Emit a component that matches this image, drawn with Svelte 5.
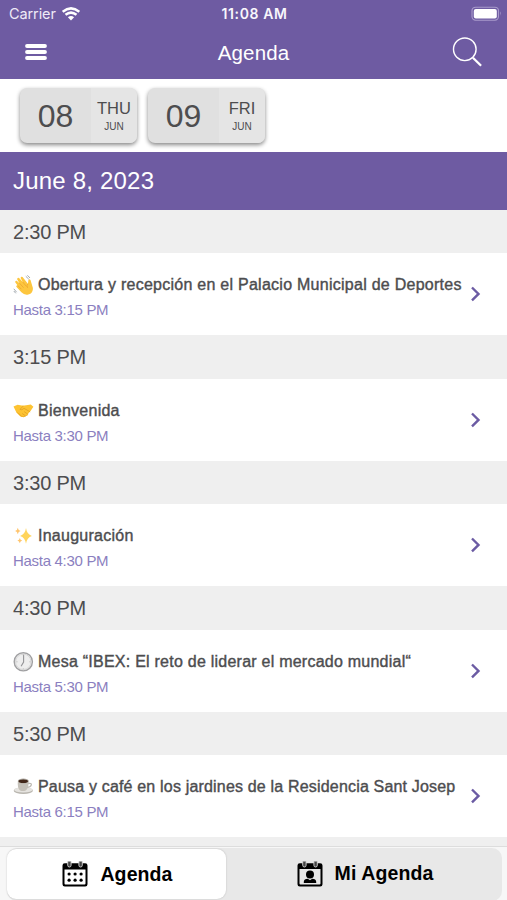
<script>
  const days = [
    { number: '08', name: 'THU', month: 'JUN' },
    { number: '09', name: 'FRI', month: 'JUN' }
  ];
  const sessions = [
    { time: '2:30 PM', icon: 'wave', title: 'Obertura y recepción en el Palacio Municipal de Deportes', end: '3:15 PM' },
    { time: '3:15 PM', icon: 'handshake', title: 'Bienvenida', end: '3:30 PM' },
    { time: '3:30 PM', icon: 'sparkles', title: 'Inauguración', end: '4:30 PM' },
    { time: '4:30 PM', icon: 'watch', title: 'Mesa “IBEX: El reto de liderar el mercado mundial“', end: '5:30 PM' },
    { time: '5:30 PM', icon: 'coffee', title: 'Pausa y café en los jardines de la Residencia Sant Josep', end: '6:15 PM' }
  ];
</script>

<div class="app">
  <header>
    <div class="status">
      <div class="carrier">
        <span>Carrier</span>
        <svg width="18" height="14" viewBox="0 0 18 14" fill="none" stroke="#fff" stroke-width="2.5">
          <path d="M.7 4.8Q9-2.1 17.3 4.8M3.5 7.8Q9 3.4 14.5 7.8" />
          <path d="M5.9 10.3Q9 7.7 12.1 10.3L9 13.5z" fill="#fff" stroke="none" />
        </svg>
      </div>
      <div class="clock">11:08 AM</div>
      <svg class="battery" width="31" height="16" viewBox="0 0 31 16">
        <rect x="1" y="1.2" width="26.5" height="13" rx="3.6" fill="none" stroke="#a99bcb" stroke-width="1.1" />
        <rect x="2.8" y="3" width="23" height="9.5" rx="2" fill="#fff" />
        <path d="M29 5.3q1.6 2.2 0 4.5z" fill="#b5a9d4" />
      </svg>
    </div>
    <div class="nav">
      <svg width="24" height="18" viewBox="0 0 24 18" stroke="#fff" stroke-width="3.8" stroke-linecap="round">
        <path d="M3 3h18M3 9h18M3 15h18" />
      </svg>
      <h1>Agenda</h1>
      <svg width="32" height="32" viewBox="0 0 32 32" fill="none" stroke="#fff">
        <circle cx="13.8" cy="13.3" r="11.3" stroke-width="1.4" />
        <path d="M21.9 21.7l8.2 8" stroke-width="2.3" />
      </svg>
    </div>
  </header>

  <div class="days">
    {#each days as day}
      <div class="day">
        <div class="number">{day.number}</div>
        <div class="weekday"><span>{day.name}</span><small>{day.month}</small></div>
      </div>
    {/each}
  </div>

  <h2>June 8, 2023</h2>

  <main>
    {#each sessions as session}
      <div class="time">{session.time}</div>
      <div class="session">
        <div class="info">
          <div class="title {session.icon}">
            <svg width="22" height="22" viewBox="0 0 22 22" fill="none">
              {#if session.icon === 'wave'}
                <path d="M4.6 11.4L2.2 8.3q-.3-1.8 1.5-1.5l2.8 2.4L4.1 5.3q.1-2.1 2-1.3l3.6 4L7.6 4q.3-2 2-.9l5.3 6.7.5-3.6q.8-1.6 2.1-.3l2.4 8q.4 5.2-4.6 6.6-4 .8-6.9-2.2l-5.1-5.5q-.5-1.6 1.3-1.4z" fill="#fdc63e" />
                <path d="M6.5 9.2l4.1 4.5M9.7 8l3.8 4.5M4.6 11.4l3.8 3.8M14.9 9.8q-1.6 1.7-.3 4.1" stroke="#e8a02e" stroke-width=".7" />
                <path d="M12.8 2.3l3 2.9M14.4 1.3l2.6 2.7M.8 14.8l2.8 3.4M.8 17l2 2.3" stroke="#9aa1a8" stroke-width=".9" />
              {:else if session.icon === 'handshake'}
                <path d="M.5 6.6l4.1-1.8 4 .8 2.8-.2 3.4-.5 3-.3 2.6 2.2-2.7 4-3.6 4.3-3.5 1.8-3-.4-4.2-4.1z" fill="#fdc332" />
                <path d="M10.3 6L7 9.3q1.6 1.5 4-1l6.2 3.6M8 15.8l-2.5-2.6M12.6 16l-3.4-2.5M15 14.4l-3.8-2.8" stroke="#dfa025" stroke-width=".8" />
                <path d="M4 12.2l3.8 4 3.1.6 4.2-2.2" stroke="#edaa20" stroke-width=".8" />
              {:else if session.icon === 'sparkles'}
                <path d="M13 3.1q.9 6.4 5.9 7.8-5 1.5-5.9 7.8-.9-6.3-5.9-7.8 5-1.4 5.9-7.8z" fill="#ffd45c" />
                <path d="M4.8 2.8q.4 2.8 2.8 3.3-2.4.6-2.8 3.2-.4-2.6-2.7-3.2 2.3-.5 2.7-3.3zM6.8 12.9q.4 2.2 2.4 2.7-2 .5-2.4 2.6-.4-2.1-2.4-2.6 2-.5 2.4-2.7z" fill="#ffc56e" />
              {:else if session.icon === 'watch'}
                <circle cx="10.3" cy="10.8" r="9.1" fill="#eee" stroke="#a0a0a2" stroke-width="1.4" />
                <circle cx="10.3" cy="10.8" r="7.7" stroke="#d0d0d0" stroke-width=".8" />
                <path d="M10.6 4v7l-2.5 4.3" stroke="#939396" stroke-width="1.1" />
                <path d="M10.3 3.1v1.4M17.5 10.8h-1.2M3.3 10.8h1.2M10.3 17.3v1" stroke="#aaa" stroke-width=".7" />
              {:else}
                <ellipse cx="10.3" cy="14.7" rx="9.6" ry="3.3" fill="#b9b6af" />
                <ellipse cx="10.3" cy="13.8" rx="9.3" ry="2.7" fill="#e5e3df" />
                <path d="M14.8 7.4q4-.5 3.5 1.5-.6 2.4-4.7 2.5" stroke="#bbb8b1" stroke-width="1.3" />
                <path d="M4.9 4.8h10.8q.1 8-3 9.7-3 1.2-5.6 0-3-2.1-2.2-9.7z" fill="#c4c0b8" />
                <ellipse cx="10.3" cy="5" rx="5.4" ry="2.4" fill="#aca79f" />
                <ellipse cx="10.3" cy="5.3" rx="4.7" ry="1.8" fill="#422719" />
              {/if}
            </svg>
            <span>{session.title}</span>
          </div>
          <div class="end">Hasta {session.end}</div>
        </div>
        <svg class="chevron" width="12" height="16" viewBox="0 0 12 16" fill="none" stroke="#6b5ba3" stroke-width="2.4">
          <path d="M2 1.5l6.5 6.4L2 14.3" />
        </svg>
      </div>
    {/each}
  </main>

  <footer>
    <div class="tabs">
      <div class="tab active">
        <svg width="28" height="28" viewBox="0 0 28 28">
          <path d="M3.8 3.2h20.4q2.3 0 2.3 2.3v18.7q0 2.3-2.3 2.3H3.8q-2.3 0-2.3-2.3V5.5q0-2.3 2.3-2.3zM3.5 9.4v14.2q0 .9.9.9h19.2q.9 0 .9-.9V9.4z" fill-rule="evenodd" />
          <path d="M6.7 1.5v3.8q0 1.7 1.7 1.7t1.7-1.7V1.5M17.9 1.5v3.8q0 1.7 1.7 1.7t1.7-1.7V1.5" fill="#444" stroke="#ddd" stroke-width=".9" />
          <g><circle cx="8.1" cy="14" r="1.6" /><circle cx="14.1" cy="14" r="1.6" /><circle cx="20.1" cy="14" r="1.6" /><circle cx="8.1" cy="20.2" r="1.6" /><circle cx="14.1" cy="20.2" r="1.6" /><circle cx="20.1" cy="20.2" r="1.6" /></g>
        </svg>
        <span>Agenda</span>
      </div>
      <div class="tab">
        <svg width="28" height="28" viewBox="0 0 28 28">
          <path d="M3.8 3.2h20.4q2.3 0 2.3 2.3v18.7q0 2.3-2.3 2.3H3.8q-2.3 0-2.3-2.3V5.5q0-2.3 2.3-2.3zM3.5 8.9v14.7q0 .9.9.9h19.2q.9 0 .9-.9V8.9z" fill-rule="evenodd" />
          <path d="M6.7 1.5v3.8q0 1.7 1.7 1.7t1.7-1.7V1.5M17.9 1.5v3.8q0 1.7 1.7 1.7t1.7-1.7V1.5" fill="#444" stroke="#ddd" stroke-width=".9" />
          <circle cx="14" cy="14.5" r="4" />
          <path d="M7.8 23v-1.3q.2-2.8 4-2.9l2.2 1.5 2.2-1.5q3.8.1 4 2.9V23z" />
        </svg>
        <span>Mi Agenda</span>
      </div>
    </div>
  </footer>
</div>

<style>
  :global(body) { margin: 0; background: #fff; }
  .app {
    position: relative;
    width: 507px; height: 900px; overflow: hidden; display: flex; flex-direction: column;
    font-family: "Liberation Sans", Arial, sans-serif; color: #4d4d4f; background: #fff;
  }
  svg { display: block; flex: none; }
  header { height: 79px; flex: none; background: #6e5ba2; color: #fff; }
  .status { height: 27px; display: grid; grid-template-columns: 1fr auto 1fr; align-items: center; padding: 0 5px 0 9px; }
  .carrier { display: flex; align-items: center; gap: 6px; font: 14.5px/27px Inter, sans-serif; letter-spacing: -.1px; color: #eeeaf7; }
  .clock { font: 600 14px/27px Inter, sans-serif; letter-spacing: .6px; margin-right: 2px; color: #f8f6fc; }
  .battery { justify-self: end; }
  .nav { height: 50px; display: flex; justify-content: space-between; align-items: center; padding: 0 24px; }
  h1 { margin: 0 0 0 8px; font-weight: 400; font-size: 20.5px; line-height: 51px; letter-spacing: .15px; }
  .days { height: 73px; flex: none; box-sizing: border-box; display: flex; gap: 11px; padding: 9px 20px; }
  .day {
    width: 117px; height: 55px; border-radius: 7px; overflow: hidden; display: flex;
    background: #e0e0e0; box-shadow: 0 2px 4px #00000078;
  }
  .number { width: 71px; text-align: center; font-size: 32px; line-height: 57px; }
  .weekday { flex: 1; display: flex; flex-direction: column; align-items: center; padding-top: 11px; background: #e5e5e5; }
  .weekday span { font-size: 16.5px; line-height: 19px; }
  .weekday small { font-size: 10px; line-height: 18px; }
  h2 {
    height: 58px; flex: none; box-sizing: border-box; margin: 0; padding-left: 13px;
    font-size: 24px; font-weight: 400; line-height: 58px; letter-spacing: .2px; color: #fff; background: #6e5ba2;
  }
  main { height: 636px; flex: none; overflow: hidden; background: #efefef; }
  .time { height: 43.4px; padding-left: 13px; font-size: 20px; line-height: 44px; letter-spacing: -.2px; background: #efefef; }
  .session { height: 82px; box-sizing: border-box; display: flex; align-items: center; justify-content: space-between; padding: 0 25px 0 13px; background: #fff; }
  .info { width: 455px; padding-top: 7px; white-space: nowrap; }
  .title { display: flex; align-items: center; gap: 3px; height: 24px; font-size: 16px; letter-spacing: .26px; -webkit-text-stroke: .4px #4d4d4f; }
  .title.watch { letter-spacing: .24px; }
  .title.coffee { letter-spacing: .18px; }
  .end { margin-top: 1px; font-size: 15px; line-height: 24px; letter-spacing: -.3px; color: #8b7fc0; }
  footer { position: absolute; left: 0; right: 0; bottom: 0; height: 54px; background: #f7f7f7; border-top: 1px solid #ddd; box-sizing: border-box; }
  .tabs { height: 53px; margin: 1px 5px 0 7px; display: flex; border-radius: 10px; background: #e8e8e8; }
  .tab { flex: 1; display: flex; align-items: center; justify-content: center; gap: 11px; height: 51px; padding-left: 1px; box-sizing: border-box; font-size: 19.5px; font-weight: 700; letter-spacing: .1px; color: #000; }
  .tab.active { flex: 0 0 219px; height: 50px; margin-top: 1px; border-radius: 9px; background: #fff; box-shadow: 0 0 2px #0003; }
</style>
